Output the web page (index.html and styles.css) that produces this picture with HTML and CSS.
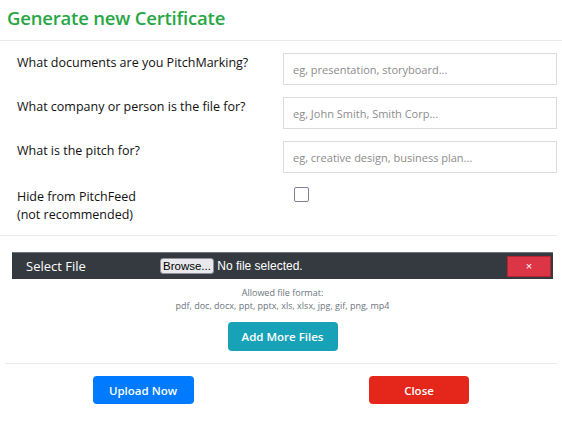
FILE: index.html
```html
<!doctype html>
<html>
<head>
<meta charset="UTF-8">
<title>Generate new Certificate</title>
<link rel="stylesheet" href="styles.css">
</head>
<body>
<div class="modal">
  <div class="modal-header">
    <h2 class="modal-title">Generate new Certificate</h2>
  </div>

  <form class="cert-form">
    <div class="form-row">
      <label>What documents are you PitchMarking?</label>
      <input type="text" class="form-control" placeholder="eg, presentation, storyboard...">
    </div>
    <div class="form-row">
      <label>What company or person is the file for?</label>
      <input type="text" class="form-control" placeholder="eg, John Smith, Smith Corp...">
    </div>
    <div class="form-row">
      <label>What is the pitch for?</label>
      <input type="text" class="form-control" placeholder="eg, creative design, business plan...">
    </div>
    <div class="form-row check-row">
      <label>Hide from PitchFeed<br>(not recommended)</label>
      <input type="checkbox" class="check">
    </div>
  </form>

  <div class="upload">
    <div class="file-bar">
      <span class="file-label">Select File</span>
      <span class="file-input"><span class="browse">Browse...</span> No file selected.</span>
      <button type="button" class="remove">&times;</button>
    </div>
    <p class="allowed">Allowed file format:<br>pdf, doc, docx, ppt, pptx, xls, xlsx, jpg, gif, png, mp4</p>
    <button type="button" class="btn btn-info">Add More Files</button>
  </div>

  <div class="modal-footer">
    <div class="col"><button type="button" class="btn btn-primary">Upload Now</button></div>
    <div class="col"><button type="button" class="btn btn-danger">Close</button></div>
  </div>
</div>
</body>
</html>
```

FILE: styles.css
```css
body { margin: 0; background: #fff; font-family: "Open Sans", "Liberation Sans", sans-serif; color: #212529; }

.modal { width: 562px; }

.modal-header { height: 41px; border-bottom: 1px solid #e9ecef; padding: 0 7px; box-sizing: border-box; }
.modal-title { margin: 0; padding-top: 5px; font-size: 18.5px; font-weight: 600; color: #28a745; line-height: 26px; letter-spacing: -0.2px; }

.cert-form { display: grid; row-gap: 12px; padding: 12px 5px 0 17px; margin: 0 5px 0 0; border-bottom: 1px solid #e9ecef; }
.form-row { display: grid; grid-template-columns: 266px 274px; }
.form-row label { font-size: 12.5px; line-height: 18px; padding-top: 1px; color: #111; }
.form-control { height: 32px; box-sizing: border-box; border: 1px solid #dcdcdc; padding: 0 9px; font-family: inherit; font-size: 11px; color: #495057; outline: none; }
.form-control::placeholder { color: #8c8c8c; }

.check-row { padding: 2px 0 11px; }
.check { appearance: none; width: 15px; height: 15px; margin: 0 0 0 11px; border: 1.5px solid #80809a; border-radius: 2px; box-sizing: border-box; }

.upload { padding: 16px 4px 12px 7px; text-align: center; margin: 0 5px; border-bottom: 1px solid #e9ecef; }
.file-bar { display: flex; align-items: center; height: 27px; box-sizing: border-box; background: #343a40; border-top: 1px solid #6c757d; padding: 0 2px 0 14px; }
.file-label { width: 134px; text-align: left; color: #fff; font-size: 13px; }
.file-input { flex: 1; text-align: left; color: #fff; font-family: "Liberation Sans", sans-serif; font-size: 12px; }
.browse { display: inline-block; background: #e9e9ed; color: #000; border: 1px solid #8f8f9d; border-radius: 3px; padding: 0 2px; line-height: 14px; font-size: 11.5px; }
.remove { width: 44px; height: 21px; background: #dc3545; border: 1px solid #b52231; color: #fff; font-size: 11px; padding: 0; }

.allowed { margin: 7px 0 10px; font-size: 9px; line-height: 13px; color: #6c757d; }

.btn { border: none; border-radius: 4px; color: #fff; font-family: inherit; font-weight: 600; font-size: 11.5px; cursor: pointer; }
.btn-info { background: #17a2b8; width: 110px; height: 29px; }
.btn-primary { background: #007bff; width: 101px; height: 28px; }
.btn-danger { background: #e4261b; width: 100px; height: 28px; }

.modal-footer { display: grid; grid-template-columns: 1fr 1fr; padding: 12px 5px; }
.modal-footer .col { text-align: center; }
```
